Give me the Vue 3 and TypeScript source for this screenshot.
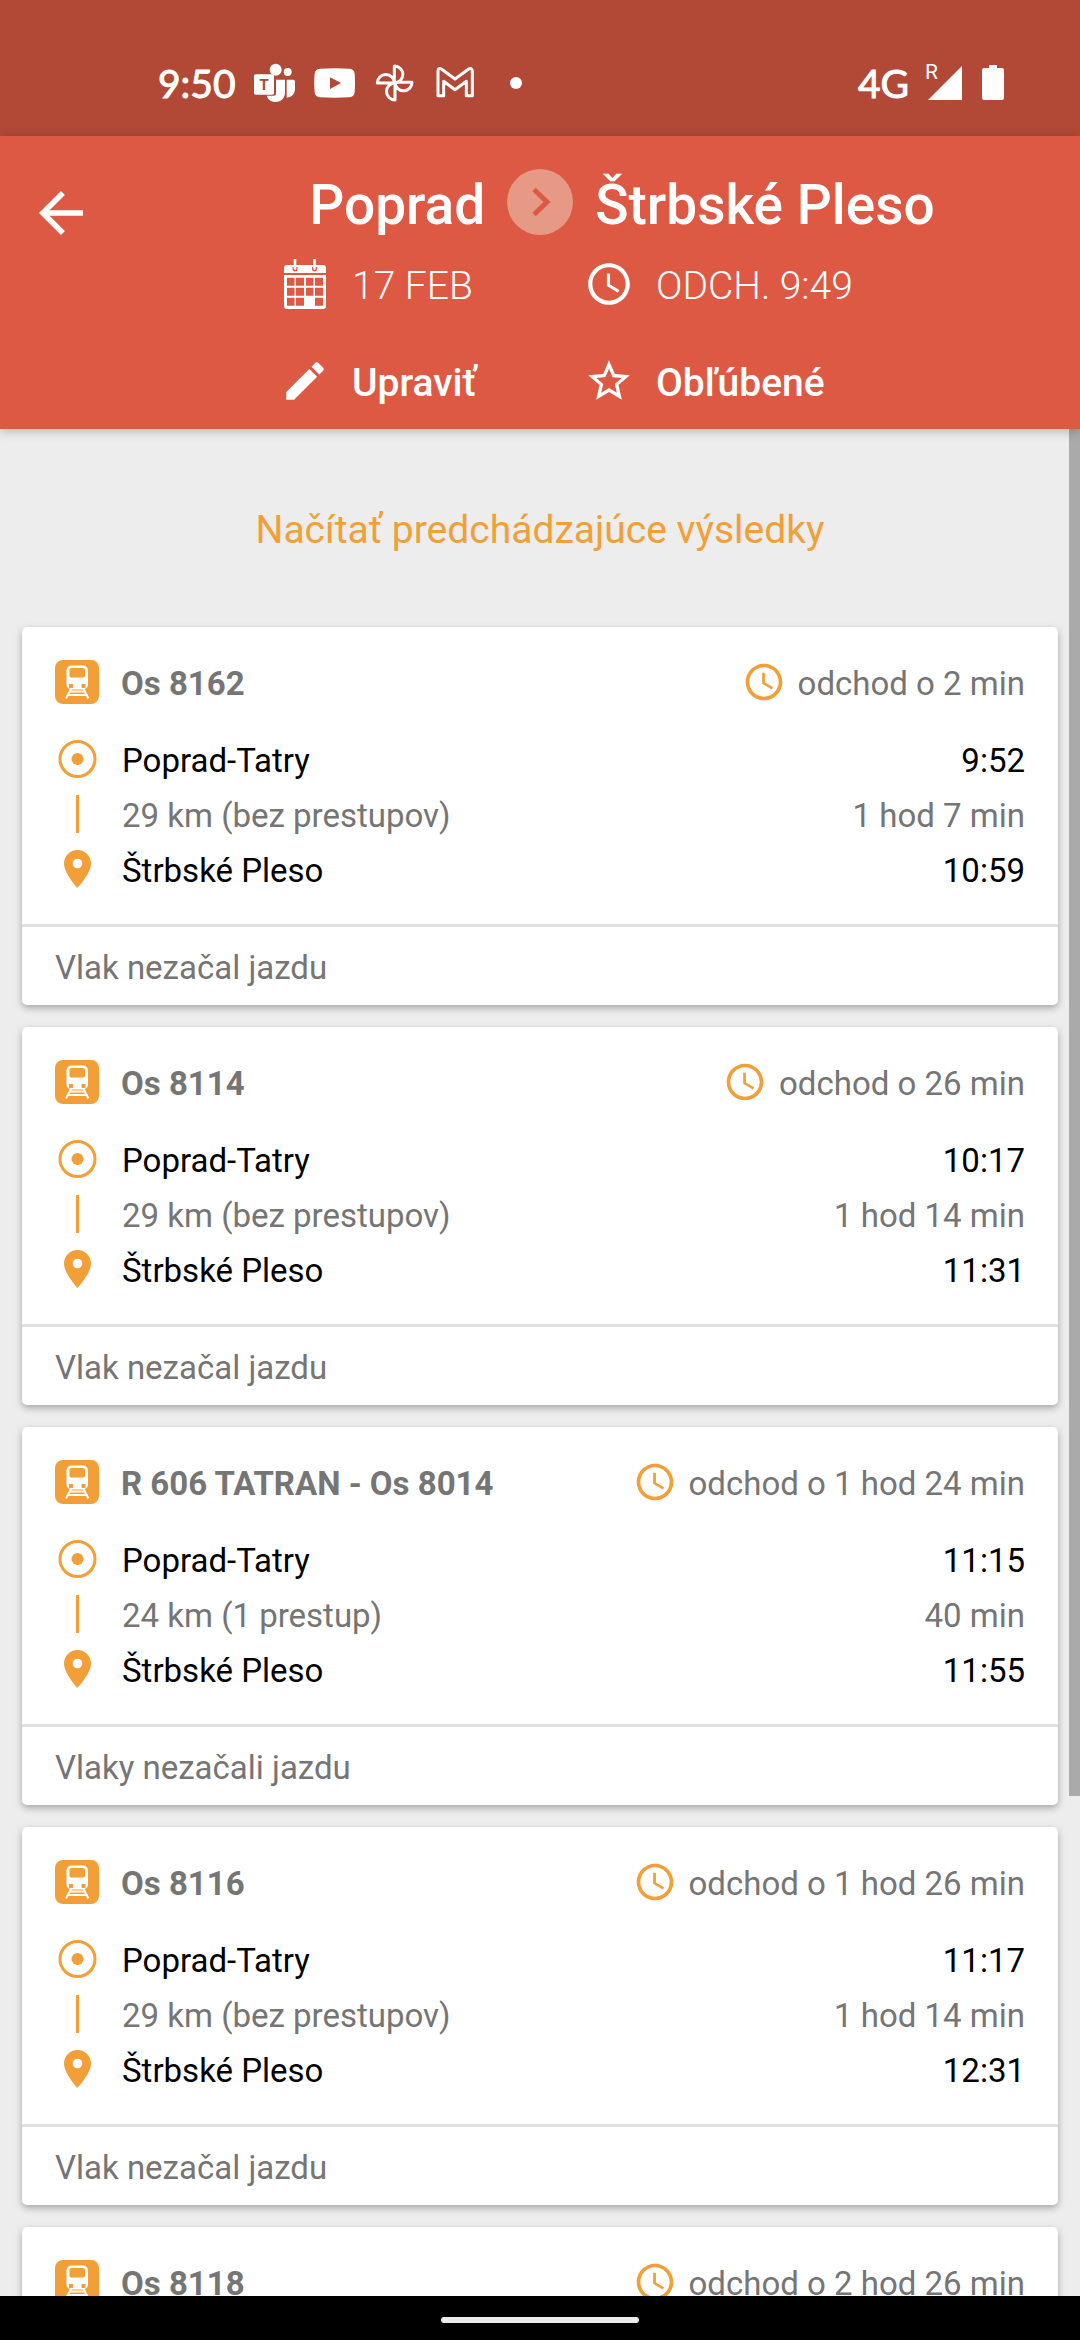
<script setup lang="ts">
interface Journey {
  from: string
  departure: string
  distance: string
  duration: string
  to: string
  arrival: string
  status: string
}

interface Connection {
  id: number
  name: string
  departsIn: string
  journey?: Journey
}

const connections: Connection[] = [
  {
    id: 1,
    name: 'Os 8162',
    departsIn: 'odchod o 2 min',
    journey: { from: 'Poprad-Tatry', departure: '9:52', distance: '29 km (bez prestupov)', duration: '1 hod 7 min', to: 'Štrbské Pleso', arrival: '10:59', status: 'Vlak nezačal jazdu' },
  },
  {
    id: 2,
    name: 'Os 8114',
    departsIn: 'odchod o 26 min',
    journey: { from: 'Poprad-Tatry', departure: '10:17', distance: '29 km (bez prestupov)', duration: '1 hod 14 min', to: 'Štrbské Pleso', arrival: '11:31', status: 'Vlak nezačal jazdu' },
  },
  {
    id: 3,
    name: 'R 606 TATRAN - Os 8014',
    departsIn: 'odchod o 1 hod 24 min',
    journey: { from: 'Poprad-Tatry', departure: '11:15', distance: '24 km (1 prestup)', duration: '40 min', to: 'Štrbské Pleso', arrival: '11:55', status: 'Vlaky nezačali jazdu' },
  },
  {
    id: 4,
    name: 'Os 8116',
    departsIn: 'odchod o 1 hod 26 min',
    journey: { from: 'Poprad-Tatry', departure: '11:17', distance: '29 km (bez prestupov)', duration: '1 hod 14 min', to: 'Štrbské Pleso', arrival: '12:31', status: 'Vlak nezačal jazdu' },
  },
  { id: 5, name: 'Os 8118', departsIn: 'odchod o 2 hod 26 min' },
]
</script>

<template>
  <div class="screen">
    <div class="status-bar">
      <div class="notifications">
        <span class="clock">9:50</span>
        <svg class="note-icon" viewBox="342 67 126 126">
          <circle cx="407" cy="90" r="18" />
          <circle cx="443" cy="97" r="12" />
          <path d="M440 120h20q5 0 5 5v22q0 24-25 27z" />
          <path d="M408 120h27v38c0 18-12 29-28 29-14 0-24-8-27-19h22q6 0 6-6z" />
          <rect x="342" y="104" width="60" height="61" rx="5" />
          <text x="372" y="152" text-anchor="middle" class="badge-letter">T</text>
        </svg>
        <svg class="note-icon" viewBox="525 67 126 126">
          <path fill-rule="evenodd" d="M543 87q44-3 88 0 15 1 16 15 2 28 0 56-1 14-16 15-44 2-88 0-15-1-16-15-3-28 0-56 1-14 16-15zM573 113v35l33-18z" />
        </svg>
        <svg class="note-icon outline" viewBox="706 67 126 126">
          <path d="M767 79a25 25 0 0 1 0 51zM820 128a25 25 0 0 1-51 0zM769 181a25 25 0 0 1 0-51zM716 130a25 25 0 0 1 51 0z" />
        </svg>
        <svg class="note-icon outline" viewBox="889 67 126 126">
          <path d="M901 168h17v-43l34 25 34-25v43h18V95q-1-12-11-7l-41 30-41-30q-10-5-10 7z" />
        </svg>
        <span class="dot"></span>
      </div>
      <div class="system">
        <span class="network">4G</span>
        <span class="roaming">R</span>
        <svg class="signal" viewBox="0 0 34 34"><path d="M34 0v34H0z" /></svg>
        <svg class="battery" viewBox="0 0 22 36"><path d="M7 0h8v3h5q2 0 2 2v28q0 2-2 2H2q-2 0-2-2V5q0-2 2-2h5z" /></svg>
      </div>
    </div>

    <header class="header">
      <button class="back" type="button" aria-label="Späť">
        <svg viewBox="0 0 24 24"><path d="M20 11H7.83l5.59-5.59L12 4l-8 8 8 8 1.41-1.41L7.83 13H20v-2z" /></svg>
      </button>
      <div class="trip">
        <h1 class="title">
          <span>Poprad</span>
          <svg class="chevron" viewBox="0 0 66 66">
            <circle cx="33" cy="33" r="33" />
            <path d="M27 20.500l13 12.500-13 12.500" />
          </svg>
          <span>Štrbské Pleso</span>
        </h1>
        <div class="pair details">
          <div class="item">
            <svg viewBox="-4 0 50 50">
              <path fill-rule="evenodd" d="M3 6h36q3 0 3 3v5H0V9q0-3 3-3zM8.500 8v2a2.500 2.500 0 0 0 5 0V8zM28 8v2a2.500 2.500 0 0 0 5 0V8z" />
              <path d="M9.700 0h2.600v10q-1.300 2-2.600 0zM29.200 0h2.600v10q-1.300 2-2.600 0z" />
              <path fill-rule="evenodd" d="M0 16h42v31q0 3-3 3H3q-3 0-3-3zM3 18.700v8h7.500v-8zM12 18.700v8h8v-8zM22 18.700v8h7.500v-8zM31 18.700v8h8v-8zM3 28.700v8h7.500v-8zM12 28.700v8h8v-8zM22 28.700v8h7.500v-8zM31 28.700v8h8v-8zM3 38.700v8h7.500v-8zM12 38.700v8h8v-8zM31 38.700v8h8v-8z" />
            </svg>
            <span>17 FEB</span>
          </div>
          <div class="item">
            <svg viewBox="0 0 24 24"><path d="M11.990 2C6.470 2 2 6.480 2 12s4.470 10 9.990 10C17.520 22 22 17.520 22 12S17.520 2 11.990 2zM12 20c-4.420 0-8-3.580-8-8s3.580-8 8-8 8 3.580 8 8-3.580 8-8 8zm.5-13H11v6l5.250 3.150.75-1.230-4.500-2.670z" /></svg>
            <span>ODCH. 9:49</span>
          </div>
        </div>
        <div class="pair actions">
          <button class="item" type="button">
            <svg viewBox="0 0 24 24"><path d="M3 17.250V21h3.750L17.810 9.940l-3.750-3.750L3 17.250zM20.710 7.040c.39-.39.39-1.020 0-1.410l-2.340-2.340c-.39-.39-1.020-.39-1.410 0l-1.830 1.830 3.750 3.750 1.830-1.830z" /></svg>
            <span>Upraviť</span>
          </button>
          <button class="item" type="button">
            <svg viewBox="0 0 24 24"><path d="M22 9.240l-7.190-.62L12 2 9.190 8.630 2 9.240l5.460 4.730L5.820 21 12 17.270 18.180 21l-1.630-7.030L22 9.240zM12 15.400l-3.760 2.270 1-4.280-3.320-2.880 4.380-.38L12 6.100l1.710 4.040 4.380.38-3.320 2.880 1 4.280L12 15.400z" /></svg>
            <span>Obľúbené</span>
          </button>
        </div>
      </div>
    </header>

    <main class="results">
      <button class="load-previous" type="button">Načítať predchádzajúce výsledky</button>
      <article v-for="c in connections" :key="c.id" class="card">
        <div class="card-head">
          <svg class="train" viewBox="0 0 44 44">
            <rect class="accent" width="44" height="44" rx="8" />
            <rect class="white" x="11.500" y="5.500" width="21.500" height="24" rx="5" />
            <rect class="accent" x="14.500" y="8" width="15.500" height="9.500" rx="2" />
            <rect class="accent" x="14" y="24" width="4" height="4" />
            <rect class="accent" x="26.500" y="24" width="4" height="4" />
            <path class="track" d="M16 29l-5 9.500M28.500 29l5 9.500M14.500 31.500h15.500M13.500 35h17.500" />
          </svg>
          <h2 class="name">{{ c.name }}</h2>
          <span class="departs">
            <svg class="departs-icon" viewBox="0 0 24 24"><path d="M11.990 2C6.470 2 2 6.480 2 12s4.470 10 9.990 10C17.520 22 22 17.520 22 12S17.520 2 11.990 2zM12 20c-4.420 0-8-3.580-8-8s3.580-8 8-8 8 3.580 8 8-3.580 8-8 8zm.5-13H11v6l5.250 3.150.75-1.230-4.500-2.670z" /></svg>
            {{ c.departsIn }}
          </span>
        </div>
        <template v-if="c.journey">
          <ul class="route">
            <li class="stop">
              <svg viewBox="0 0 44 52"><circle cx="22.500" cy="26" r="17.500" class="ring" /><circle cx="22.500" cy="26" r="6" class="accent" /></svg>
              <span>{{ c.journey.from }}</span>
              <time>{{ c.journey.departure }}</time>
            </li>
            <li class="stop leg">
              <svg viewBox="0 0 44 52"><path class="accent" d="M21 7h3v38h-3z" /></svg>
              <span>{{ c.journey.distance }}</span>
              <span class="duration">{{ c.journey.duration }}</span>
            </li>
            <li class="stop">
              <svg viewBox="0 0 44 52"><path class="accent" fill-rule="evenodd" d="M22.500 7c-7.500 0-13.500 6-13.500 13.500C9 30.500 22.500 45 22.500 45S36 30.500 36 20.500C36 13 30 7 22.500 7zm0 18.300a4.800 4.800 0 1 1 0-9.600 4.800 4.800 0 0 1 0 9.600z" /></svg>
              <span>{{ c.journey.to }}</span>
              <time>{{ c.journey.arrival }}</time>
            </li>
          </ul>
          <p class="status">{{ c.journey.status }}</p>
        </template>
      </article>
      <div class="scrollbar"></div>
    </main>

    <div class="nav-bar"><span class="handle"></span></div>
  </div>
</template>

<style>
body {
  margin: 0;
}
</style>

<style scoped>
.screen {
  display: flex;
  flex-direction: column;
  height: 100vh;
  overflow: hidden;
  background: #ededed;
  font-family: Roboto, sans-serif;
}

button {
  border: 0;
  padding: 0;
  background: none;
  font: inherit;
  color: inherit;
  text-align: left;
}

svg {
  display: block;
  flex: none;
}

.status-bar {
  display: flex;
  flex: none;
  justify-content: space-between;
  box-sizing: border-box;
  height: 136px;
  padding: 30px 76px 0 158px;
  background: #b24936;
  color: #fff;
  fill: #fff;
}

.notifications,
.system {
  display: flex;
  align-items: center;
}

.notifications {
  gap: 18px;
}

.clock,
.network {
  font: 400 39px/48px Lato, sans-serif;
  -webkit-text-stroke: 1px #fff;
}

.note-icon {
  width: 42px;
  height: 42px;
}

.badge-letter {
  fill: #b24936;
  font: 700 46px Roboto, sans-serif;
}

.outline {
  fill: none;
  stroke: #fff;
  stroke-width: 9;
  stroke-linejoin: round;
}

.dot {
  width: 12px;
  height: 12px;
  margin-left: 16px;
  border-radius: 50%;
  background: #fff;
}

.roaming {
  align-self: flex-start;
  margin: 30px -10px 0 16px;
  font-size: 21px;
  line-height: 24px;
}

.signal {
  width: 34px;
  height: 34px;
}

.battery {
  width: 22px;
  height: 36px;
  margin-left: 20px;
}

.header {
  position: relative;
  z-index: 1;
  display: flex;
  flex: none;
  padding: 33px 0 19px 28px;
  background: #de5943;
  box-shadow: 0 2px 10px rgba(0, 0, 0, 0.25);
  color: #fff;
  fill: #fff;
}

.back {
  flex: none;
  align-self: flex-start;
  width: 66px;
  height: 66px;
  margin: 11px 70px 0 0;
}

.trip {
  flex: 1;
}

.title {
  display: flex;
  justify-content: center;
  gap: 22px;
  margin: 0 0 18px;
  font-size: 55px;
  font-weight: 500;
  line-height: 72px;
}

.chevron {
  width: 66px;
  height: 66px;
}

.chevron circle {
  fill: #e69984;
}

.chevron path {
  fill: none;
  stroke: #de5943;
  stroke-width: 5;
}

.pair {
  display: grid;
  grid-template-columns: 304px 1fr;
  padding-left: 116px;
  font-size: 39px;
  line-height: 54px;
}

.item {
  display: flex;
  gap: 22px;
}

.item svg {
  width: 50px;
  height: 50px;
}

.details {
  margin-bottom: 43px;
  font-weight: 300;
}

.actions {
  font-weight: 500;
}

.results {
  position: relative;
  display: flex;
  flex: 1;
  flex-direction: column;
  min-height: 0;
  overflow: hidden;
}

.results .load-previous {
  flex: none;
  padding: 77px 0 73px;
  color: #f29f38;
  font-size: 39px;
  line-height: 48px;
  text-align: center;
}

.card {
  flex: none;
  margin: 0 22px 22px;
  border-radius: 5px;
  background: #fff;
  box-shadow: 0 3px 7px rgba(0, 0, 0, 0.3);
  color: #757575;
  font-size: 33px;
}

.card-head {
  display: flex;
  gap: 22px;
  padding: 33px 33px 25px;
  line-height: 48px;
}

.train {
  width: 44px;
  height: 44px;
}

.accent {
  fill: #f29f38;
}

.white {
  fill: #fff;
}

.track {
  fill: none;
  stroke: #fff;
  stroke-width: 2;
}

.name {
  flex: 1;
  margin: 0;
  font-size: 33px;
  font-weight: 700;
}

.departs {
  display: flex;
  gap: 12px;
}

.departs-icon {
  width: 44px;
  height: 44px;
  fill: #f29f38;
}

.route {
  margin: 0;
  padding: 0 33px 26px;
  list-style: none;
}

.stop {
  display: flex;
  color: #000;
  line-height: 55px;
}

.stop svg {
  width: 44px;
  height: 52px;
  margin-right: 23px;
}

.ring {
  fill: none;
  stroke: #f29f38;
  stroke-width: 3;
}

.stop time,
.duration {
  margin-left: auto;
}

.leg {
  color: #757575;
}

.status {
  margin: 0;
  padding: 17px 33px 13px;
  border-top: 3px solid #e0e0e0;
  line-height: 48px;
}

.scrollbar {
  position: absolute;
  top: 0;
  right: 0;
  width: 11px;
  height: 73.2%;
  background: #aaa;
}

.nav-bar {
  display: flex;
  flex: none;
  align-items: center;
  justify-content: center;
  height: 44px;
  background: #000;
}

.handle {
  width: 198px;
  height: 6px;
  margin-top: 4px;
  border-radius: 3px;
  background: #ebebeb;
}
</style>
